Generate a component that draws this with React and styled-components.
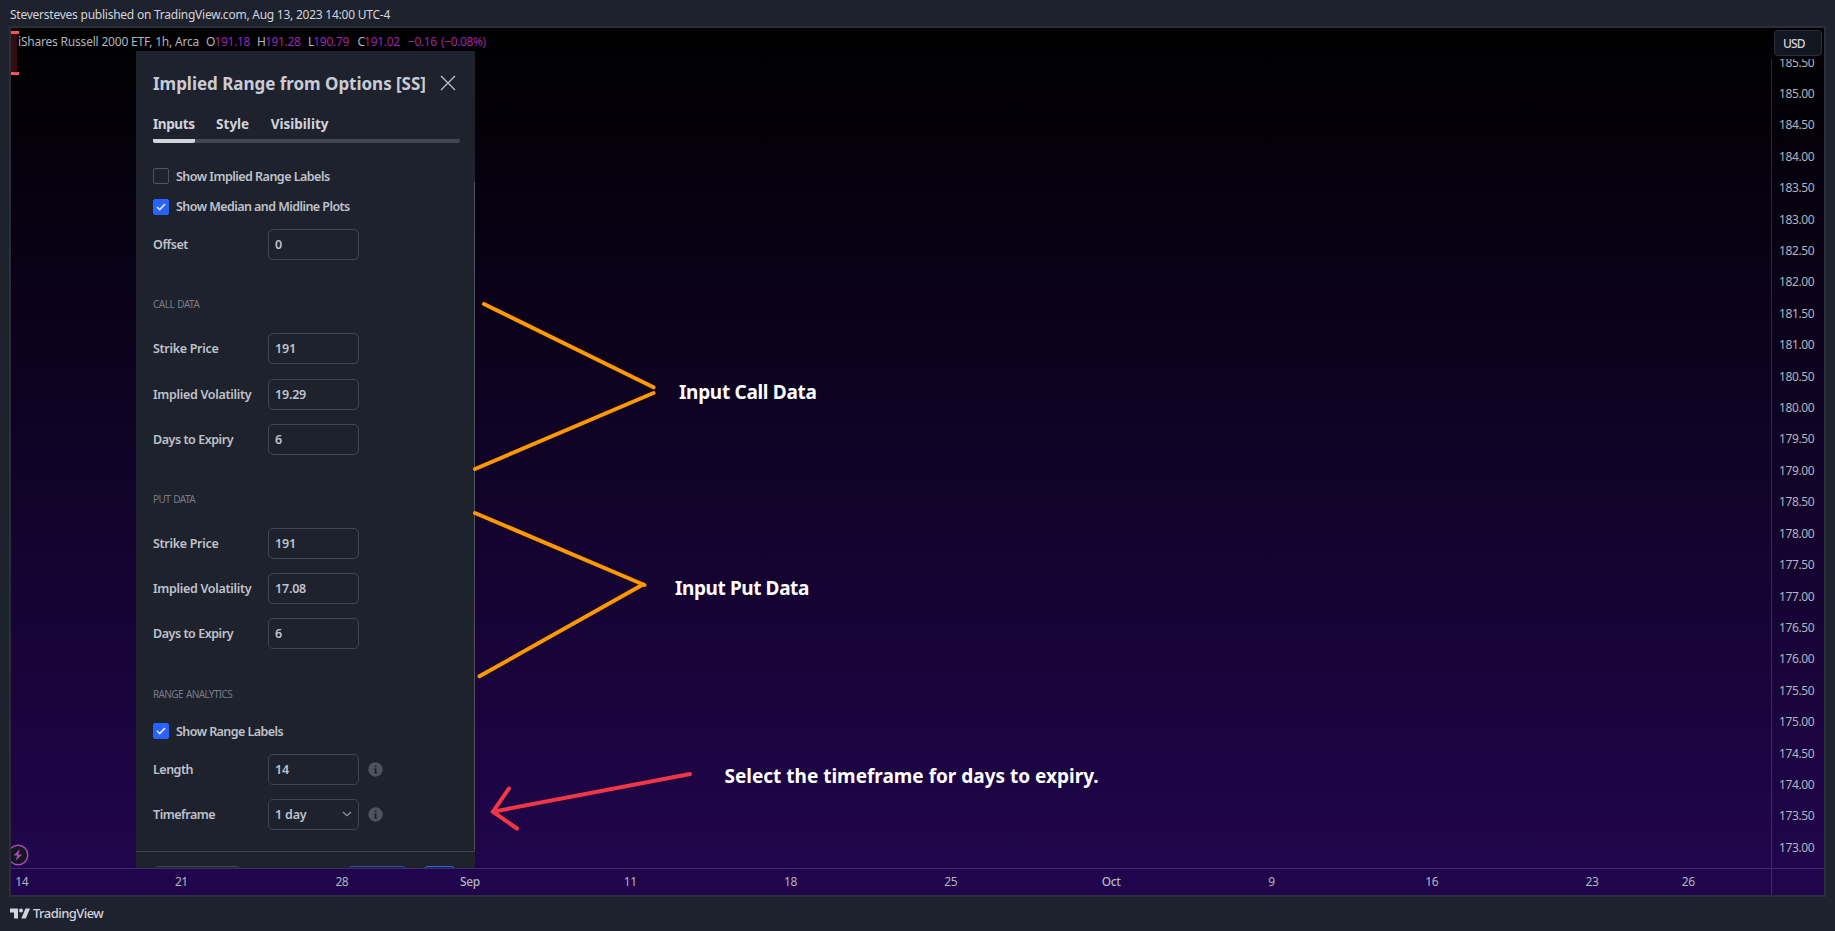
import React from "react";
import styled, { createGlobalStyle } from "styled-components";

const GlobalStyle = createGlobalStyle`
  * {
    box-sizing: border-box;
  }

  body {
    margin: 0;
    background: #1e222d;
    color: #d1d4dc;
    font-family: "Noto Sans", "Open Sans", sans-serif;
  }
`;

const StyledPage = styled.div`
  display: flex;
  flex-direction: column;
  width: 1835px;
  height: 931px;
  padding: 0 9px;
  overflow: hidden;
`;

const StyledText = styled.span`
  letter-spacing: ${({ $spacing }) => $spacing || 0}px;
  white-space: pre;
`;

const StyledPublished = styled.header`
  height: 26px;
  padding: 6px 0 0 1px;
  font-size: 12px;
  line-height: 17px;
`;

const StyledFrame = styled.main`
  display: grid;
  grid-template-columns: 1760px 1fr;
  grid-template-rows: 840px 1fr;
  height: 871px;
  border: 2px solid #2a2e39;
  background: linear-gradient(#000000 0, #20054c 840px);
`;

const StyledPane = styled.section`
  position: relative;
  overflow: hidden;
`;

const StyledLegend = styled.div`
  display: flex;
  height: 23px;
  padding: 5px 0 0 7px;
  color: #b2b5be;
  font-size: 12px;
  line-height: 17px;
`;

const StyledSymbol = styled.div`
  width: 188px;
`;

const StyledQuote = styled.div`
  width: ${({ $width }) => $width}px;
  white-space: nowrap;
`;

const StyledQuoteValue = styled(StyledText)`
  color: #9c27b0;
  word-spacing: 1.5px;
`;

const StyledCandle = styled.div`
  position: absolute;
  top: 3px;
  left: 0;
  width: 8px;
  height: 44px;
  border: solid #ff5252;
  border-width: 3px 0;
  background: linear-gradient(90deg, #330d10 6px, transparent 6px);
`;

const StyledDialog = styled.div`
  position: absolute;
  top: 23px;
  left: 125px;
  width: 339px;
  height: 860px;
  background: #1e222d;
`;

const StyledDialogHeader = styled.div`
  display: flex;
  align-items: center;
  justify-content: space-between;
  height: 64px;
  padding: 0 19.5px 0 17px;
  color: #c9ccd6;
  font-size: 17px;
  font-weight: 700;
`;

const StyledTabs = styled.div`
  display: flex;
  gap: 21.5px;
  height: 28px;
  margin: 0 15px 0 17px;
  border-bottom: 4px solid #434651;
  border-radius: 2px;
`;

const StyledTab = styled.div`
  height: 28px;
  border-bottom: 4px solid ${({ $active }) => ($active ? "#d1d4dc" : "transparent")};
  border-radius: 2px;
  font-size: 13.5px;
  font-weight: 700;
  line-height: 19px;
`;

const StyledForm = styled.div`
  display: flex;
  flex-direction: column;
  height: 708.5px;
  padding: 17.8px 0 0 17px;
  border-bottom: 1px solid #434651;
  color: #bfc2cb;
  font-size: 12.5px;
  font-weight: 600;
`;

const StyledScroller = styled.div`
  position: absolute;
  top: 131px;
  right: 0;
  width: 1px;
  height: 668px;
  background: #50535e;
`;

const StyledCheckRow = styled.label`
  display: flex;
  align-items: center;
  gap: 7px;
  height: 30.5px;
`;

const StyledCheckbox = styled.span`
  display: flex;
  align-items: center;
  justify-content: center;
  width: 16px;
  height: 16px;
  border: 1px solid ${({ $checked }) => ($checked ? "#2962ff" : "#50535e")};
  border-radius: 2px;
  background: ${({ $checked }) => ($checked ? "#2962ff" : "transparent")};
`;

const StyledFieldRow = styled.div`
  display: flex;
  align-items: center;
  height: 45.15px;
`;

const StyledFieldLabel = styled.div`
  width: 115px;
`;

const StyledInput = styled.div`
  display: flex;
  align-items: center;
  justify-content: space-between;
  width: 91px;
  height: 31px;
  margin-right: 8.5px;
  padding: 0 6px;
  border: 1px solid #434651;
  border-radius: 5px;
`;

const StyledSectionTitle = styled.div`
  height: 59.4px;
  padding-top: 30px;
  color: #787b86;
  font-size: 10px;
  font-weight: 400;
  line-height: 14px;
  word-spacing: 1px;
`;

const StyledFooter = styled.div`
  display: flex;
  padding: 14px 18px 0;
`;

const StyledFooterButton = styled.div`
  width: ${({ $width }) => $width}px;
  height: 30px;
  margin-left: ${({ $gap }) => $gap || 0}px;
  border: 1px solid ${({ $color }) => $color};
  border-radius: 5px;
`;

const StyledDrawings = styled.svg`
  position: absolute;
  top: 0;
  left: 0;
  fill: none;
  stroke-width: 4;
  stroke-linecap: round;
`;

const StyledNote = styled.div`
  position: absolute;
  top: ${({ $top }) => $top}px;
  left: ${({ $left }) => $left}px;
  color: #ffffff;
  font-size: 19px;
  font-weight: 700;
  line-height: 26px;
`;

const StyledBadge = styled.svg`
  position: absolute;
  top: 816px;
  left: -4px;
`;

const StyledPriceAxis = styled.aside`
  display: flex;
  flex-direction: column;
  overflow: hidden;
`;

const StyledCurrency = styled.div`
  flex: none;
  width: 48px;
  height: 26px;
  margin: 2px 0 3px 3px;
  padding-left: 8px;
  border: 1px solid #2a2e39;
  border-radius: 4px;
  background: #131722;
  font-size: 12px;
  font-weight: 500;
  line-height: 25px;
`;

const StyledPrices = styled.div`
  flex: 1;
  overflow: hidden;
  padding-left: 7px;
  border-left: 1px solid rgba(200, 190, 230, 0.2);
  color: #b2b5be;
  font-size: 12px;

  &::before {
    content: "";
    display: block;
    margin-top: -12.4px;
  }
`;

const StyledPrice = styled.div`
  height: 31.41px;
  line-height: 31.41px;
`;

const StyledTimeAxis = styled.div`
  display: flex;
  border-top: 1px solid rgba(200, 190, 230, 0.2);
  color: #b2b5be;
  font-size: 12px;
  line-height: 26px;
`;

const StyledTime = styled.div`
  display: flex;
  justify-content: center;
  width: 0;
  margin-left: ${({ $gap }) => $gap}px;
  font-weight: ${({ $strong }) => ($strong ? 500 : 400)};
`;

const StyledCorner = styled.div`
  border-top: 1px solid rgba(200, 190, 230, 0.2);
  border-left: 1px solid rgba(200, 190, 230, 0.2);
`;

const StyledBrand = styled.footer`
  display: flex;
  align-items: center;
  gap: 3px;
  height: 32px;
  padding-left: 1px;
  font-size: 13px;
  font-weight: 500;
`;

const quotes = [
  { label: "O", value: "191.18", width: 51 },
  { label: "H", value: "191.28", width: 51 },
  { label: "L", value: "190.79", width: 49.5 },
  { label: "C", value: "191.02", width: 50.5 }
];

// gap is the distance from the previous label, 32px per day
const times = [
  { label: "14", gap: 10.7 },
  { label: "21", gap: 159.7 },
  { label: "28", gap: 160.5 },
  { label: "Sep", gap: 128, strong: true },
  { label: "11", gap: 160.3 },
  { label: "18", gap: 160.3 },
  { label: "25", gap: 160.3 },
  { label: "Oct", gap: 160.3, strong: true },
  { label: "9", gap: 160.3 },
  { label: "16", gap: 160.3 },
  { label: "23", gap: 160.3 },
  { label: "26", gap: 96.2 }
];

const prices = Array.from({ length: 26 }, (_, i) => (185.5 - i * 0.5).toFixed(2));

const CheckRow = ({ label, spacing, checked }) => (
  <StyledCheckRow>
    <StyledCheckbox $checked={checked}>
      {checked && (
        <svg width="10" height="8" viewBox="0 0 10 8" fill="none">
          <path d="M1 4l2.7 2.6L9 1.2" stroke="#e0e3eb" strokeWidth="1.7" />
        </svg>
      )}
    </StyledCheckbox>
    <StyledText $spacing={spacing}>{label}</StyledText>
  </StyledCheckRow>
);

const InfoIcon = () => (
  <svg width="15" height="15" viewBox="0 0 15 15">
    <circle cx="7.5" cy="7.5" r="7.2" fill="#50535e" />
    <path d="M6.7 3.4h1.8v1.8H6.7zM6 6.4h2.5v4h.8v1H6v-1h.8v-3H6z" fill="#1e222d" />
  </svg>
);

const Field = ({ label, spacing, value, select, info }) => (
  <StyledFieldRow>
    <StyledFieldLabel>
      <StyledText $spacing={spacing}>{label}</StyledText>
    </StyledFieldLabel>
    <StyledInput>
      <StyledText $spacing={-0.2}>{value}</StyledText>
      {select && (
        <svg width="10" height="6" viewBox="0 0 10 6" fill="none">
          <path d="M1 1l4 3.6L9 1" stroke="#9598a1" strokeWidth="1.2" />
        </svg>
      )}
    </StyledInput>
    {info && <InfoIcon />}
  </StyledFieldRow>
);

const OptionFields = ({ volatility }) => (
  <React.Fragment>
    <Field label="Strike Price" spacing={-0.3} value="191" />
    <Field label="Implied Volatility" spacing={-0.3} value={volatility} />
    <Field label="Days to Expiry" spacing={-0.45} value="6" />
  </React.Fragment>
);

const SettingsDialog = () => (
  <StyledDialog>
    <StyledDialogHeader>
      <StyledText $spacing={-0.03}>Implied Range from Options [SS]</StyledText>
      <svg width="16" height="16" viewBox="0 0 16 16">
        <path d="M1 1l14 14M15 1L1 15" stroke="#c1c4cd" strokeWidth="1.2" />
      </svg>
    </StyledDialogHeader>
    <StyledTabs>
      <StyledTab $active>
        <StyledText $spacing={-0.4}>Inputs</StyledText>
      </StyledTab>
      <StyledTab>
        <StyledText>Style</StyledText>
      </StyledTab>
      <StyledTab>
        <StyledText>Visibility</StyledText>
      </StyledTab>
    </StyledTabs>
    <StyledForm>
      <CheckRow label="Show Implied Range Labels" spacing={-0.52} />
      <CheckRow label="Show Median and Midline Plots" spacing={-0.56} checked />
      <Field label="Offset" spacing={-0.45} value="0" />
      <StyledSectionTitle>
        <StyledText $spacing={-0.5}>CALL DATA</StyledText>
      </StyledSectionTitle>
      <OptionFields volatility="19.29" />
      <StyledSectionTitle>
        <StyledText $spacing={-0.55}>PUT DATA</StyledText>
      </StyledSectionTitle>
      <OptionFields volatility="17.08" />
      <StyledSectionTitle>
        <StyledText $spacing={-0.62}>RANGE ANALYTICS</StyledText>
      </StyledSectionTitle>
      <CheckRow label="Show Range Labels" spacing={-0.56} checked />
      <Field label="Length" spacing={-0.5} value="14" info />
      <Field label="Timeframe" spacing={-0.47} value="1 day" select info />
    </StyledForm>
    <StyledFooter>
      <StyledFooterButton $width={87} $color="#434651" />
      <StyledFooterButton $width={60} $gap={106} $color="#2a4fb5" />
      <StyledFooterButton $width={33} $gap={16} $color="#2962ff" />
    </StyledFooter>
    <StyledScroller />
  </StyledDialog>
);

const Drawings = () => (
  <StyledDrawings width="1760" height="840" viewBox="11 28 1760 840">
    <g stroke="#ff9800">
      <path d="M484 304L653.5 387.3" />
      <path d="M475 469L653.5 393" />
      <path d="M475 513L644.5 585" />
      <path d="M479.5 676.3L643 584.5" />
    </g>
    <g stroke="#f23645">
      <path d="M690 774L493 811.7" />
      <path d="M509 788.5L493 811.7L517 828.5" />
    </g>
  </StyledDrawings>
);

const App = () => (
  <StyledPage>
    <GlobalStyle />
    <StyledPublished>
      <StyledText $spacing={-0.24}>
        Steversteves published on TradingView.com, Aug 13, 2023 14:00 UTC-4
      </StyledText>
    </StyledPublished>
    <StyledFrame>
      <StyledPane>
        <StyledCandle />
        <StyledLegend>
          <StyledSymbol>
            <StyledText $spacing={-0.2}>iShares Russell 2000 ETF, 1h, Arca</StyledText>
          </StyledSymbol>
          {quotes.map(({ label, value, width }) => (
            <StyledQuote key={label} $width={width}>
              <StyledText $spacing={-1}>{label}</StyledText>
              <StyledQuoteValue $spacing={-0.3}>{value}</StyledQuoteValue>
            </StyledQuote>
          ))}
          <StyledQuote>
            <StyledQuoteValue $spacing={-0.38}>−0.16 (−0.08%)</StyledQuoteValue>
          </StyledQuote>
        </StyledLegend>
        <SettingsDialog />
        <Drawings />
        <StyledNote $top={351} $left={668}>
          <StyledText $spacing={-0.3}>Input Call Data</StyledText>
        </StyledNote>
        <StyledNote $top={547} $left={664}>
          <StyledText $spacing={-0.4}>Input Put Data</StyledText>
        </StyledNote>
        <StyledNote $top={735} $left={713.5}>
          <StyledText>Select the timeframe for days to expiry.</StyledText>
        </StyledNote>
        <StyledBadge width="22" height="22" viewBox="0 0 22 22">
          <circle cx="11" cy="11" r="9.8" fill="#131722" stroke="#ab47bc" strokeWidth="1.4" />
          <path d="M13 5L6.5 11.5h3.8L8.5 17l6.7-6.6h-4z" fill="#ab47bc" />
        </StyledBadge>
      </StyledPane>
      <StyledPriceAxis>
        <StyledCurrency>
          <StyledText $spacing={-0.8}>USD</StyledText>
        </StyledCurrency>
        <StyledPrices>
          {prices.map(price => (
            <StyledPrice key={price}>
              <StyledText $spacing={-0.38}>{price}</StyledText>
            </StyledPrice>
          ))}
        </StyledPrices>
      </StyledPriceAxis>
      <StyledTimeAxis>
        {times.map(({ label, gap, strong }) => (
          <StyledTime key={label} $gap={gap} $strong={strong}>
            <StyledText $spacing={-0.4}>{label}</StyledText>
          </StyledTime>
        ))}
      </StyledTimeAxis>
      <StyledCorner />
    </StyledFrame>
    <StyledBrand>
      <svg width="20" height="11" viewBox="0 0 20 11" fill="#d1d4dc">
        <path d="M0 0.5h8v10H4v-6H0z" />
        <circle cx="11" cy="2.5" r="2" />
        <path d="M15.5 0.5H20l-4.2 10h-4.5z" />
      </svg>
      <StyledText $spacing={-0.55}>TradingView</StyledText>
    </StyledBrand>
  </StyledPage>
);

export default App;
